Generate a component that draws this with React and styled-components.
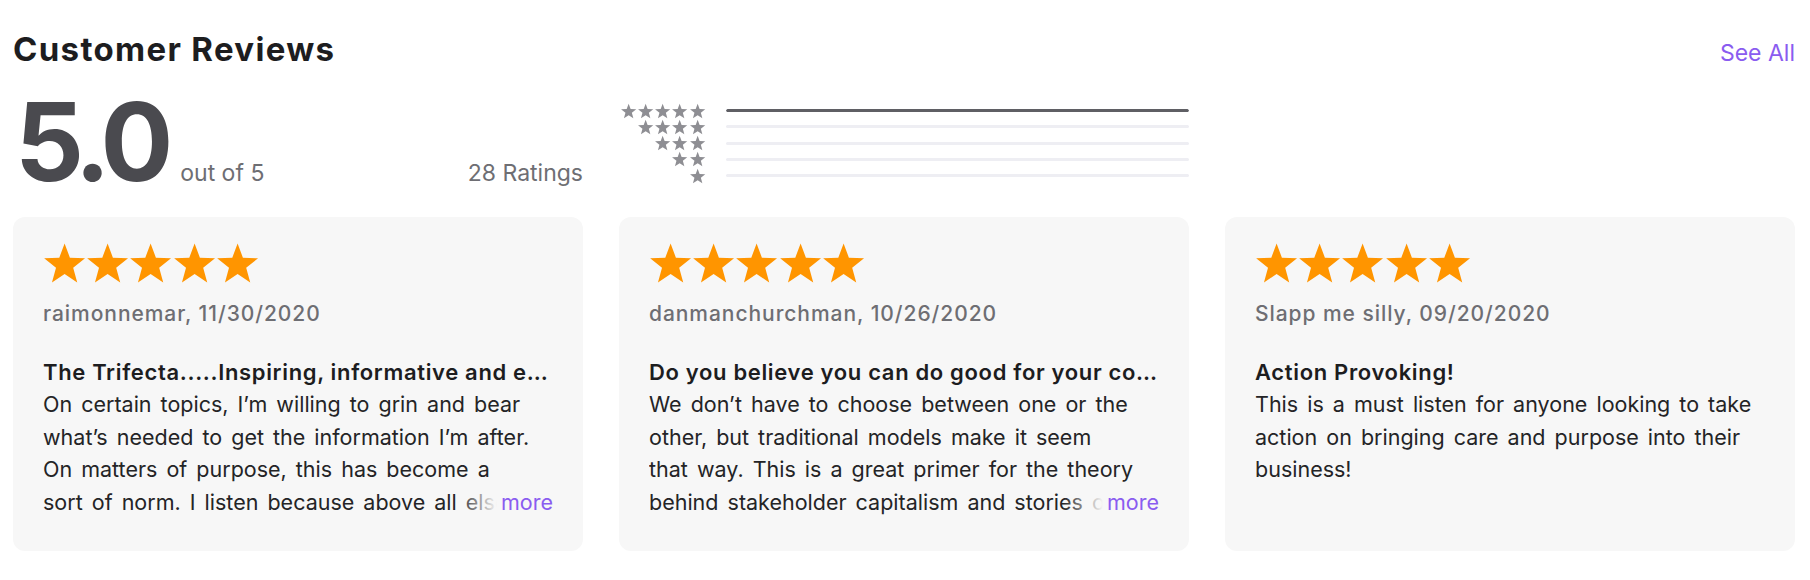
import React from "react";
import styled, { createGlobalStyle } from "styled-components";

const GlobalStyle = createGlobalStyle`
  html, body {
    margin: 0;
    padding: 0;
    background: #ffffff;
  }
  body {
    font-family: Inter, "Liberation Sans", "Noto Sans", sans-serif;
    -webkit-font-smoothing: antialiased;
  }
`;

const PURPLE = "#8a5cf0";
const CARD_BG = "#f7f7f7";

const starPoints = (cx, cy, R, r) =>
  Array.from({ length: 10 }, (_, i) => {
    const a = -Math.PI / 2 + (i * Math.PI) / 5;
    const rad = i % 2 === 0 ? R : r;
    return `${(cx + rad * Math.cos(a)).toFixed(2)},${(cy + rad * Math.sin(a)).toFixed(2)}`;
  }).join(" ");

const Star = ({ size, color }) => {
  const { w, h, R, cy } = size;
  return (
    <svg width={w} height={h} viewBox={`0 0 ${w} ${h}`} aria-hidden="true">
      <polygon points={starPoints(w / 2, cy, R, R * 0.42)} fill={color} />
    </svg>
  );
};

const BIG_STAR = { w: 43.2, h: 41, R: 21.5, cy: 22 };
const SMALL_STAR = { w: 17.3, h: 16, R: 8, cy: 8.8 };

const Page = styled.div`
  padding: 31px 15px 0 13px;
  width: 1782px;
`;

const Header = styled.header`
  display: flex;
  justify-content: space-between;
  align-items: baseline;
`;

const Title = styled.h2`
  margin: 0;
  font-size: 33px;
  line-height: 36px;
  font-weight: 700;
  color: #1d1d1f;
  letter-spacing: 0.04em;
`;

const SeeAll = styled.a`
  font-size: 23px;
  line-height: 36px;
  color: ${PURPLE};
  text-decoration: none;
  cursor: pointer;
`;

const Summary = styled.section`
  display: grid;
  grid-template-columns: repeat(3, 1fr);
  column-gap: 36px;
  margin-top: 18.5px;
  align-items: start;
`;

const ScoreBlock = styled.div`
  display: flex;
  align-items: baseline;
`;

const BigScore = styled.span`
  font-size: 108px;
  line-height: 103px;
  font-weight: 700;
  letter-spacing: -0.065em;
  color: #4a4a4f;
  margin-left: 2px;
`;

const MutedText = styled.span`
  font-size: 23px;
  line-height: 28px;
  color: #6e6e73;
  margin-left: ${(p) => (p.$push ? "auto" : "14px")};
`;

const Histogram = styled.div`
  display: flex;
  flex-direction: column;
  padding-top: 13px;
`;

const HistRow = styled.div`
  display: flex;
  align-items: center;
  height: 16.25px;
  gap: 20px;
`;

const StarCell = styled.div`
  width: 87px;
  display: flex;
  justify-content: flex-end;
`;

const Track = styled.div`
  flex: 1;
  height: 3px;
  border-radius: 2px;
  background: #eeeef3;
  overflow: hidden;
`;

const Fill = styled.div`
  height: 100%;
  background: #5f5f64;
  border-radius: 2px;
`;

const Cards = styled.section`
  display: grid;
  grid-template-columns: repeat(3, 1fr);
  column-gap: 36px;
  margin-top: 24px;
`;

const Card = styled.article`
  background: ${CARD_BG};
  border-radius: 12px;
  height: 334px;
  box-sizing: border-box;
  padding: 26px 30px 0 30px;
  min-width: 0;
`;

const StarsRow = styled.div`
  display: flex;
  height: 41px;
`;

const Author = styled.div`
  margin-top: 18.5px;
  font-size: 21px;
  line-height: 24px;
  font-weight: 500;
  letter-spacing: 0.045em;
  color: #6e6e73;
`;

const ReviewTitle = styled.h3`
  margin: 30px 0 0 0;
  font-size: 22px;
  line-height: 32px;
  font-weight: 600;
  letter-spacing: 0.03em;
  color: #1d1d1f;
  white-space: nowrap;
  overflow: hidden;
  text-overflow: ellipsis;
`;

const BodyWrap = styled.div`
  position: relative;
`;

const Body = styled.p`
  margin: 0;
  max-width: ${(p) => (p.$maxWidth ? `${p.$maxWidth}px` : "none")};
  font-size: 21.5px;
  line-height: 32.5px;
  letter-spacing: 0;
  word-spacing: 3px;
  color: #242426;
  max-height: 130px;
  overflow: hidden;
`;

const More = styled.a`
  position: absolute;
  right: 0;
  bottom: 0;
  font-size: 21.5px;
  line-height: 32.5px;
  color: ${PURPLE};
  padding-left: 44px;
  background: linear-gradient(to right, rgba(247, 247, 247, 0) 0, ${CARD_BG} 40px);
  cursor: pointer;
`;

const histogram = [100, 0, 0, 0, 0];

const reviews = [
  {
    author: "raimonnemar, 11/30/2020",
    title: "The Trifecta.....Inspiring, informative and entertaining",
    body:
      "On certain topics, I’m willing to grin and bear what’s needed to get the information I’m after. On matters of purpose, this has become a sort\u00a0of norm. I listen because above all else this show reminds me why the work matters.",
    more: true,
  },
  {
    author: "danmanchurchman, 10/26/2020",
    title: "Do you believe you can do good for your company and the world?",
    body:
      "We don’t have to choose between one or the other, but traditional models make it seem that way. This is a great primer for the theory behind stakeholder capitalism and stories of leaders who are putting it into practice.",
    more: true,
    width: 487,
  },
  {
    author: "Slapp me silly, 09/20/2020",
    title: "Action Provoking!",
    body:
      "This is a must listen for anyone looking to take action on bringing care and purpose into their business!",
    more: false,
  },
];

export default function App() {
  return (
    <>
      <GlobalStyle />
      <Page>
        <Header>
          <Title>Customer Reviews</Title>
          <SeeAll>See All</SeeAll>
        </Header>

        <Summary>
          <ScoreBlock>
            <BigScore>5.0</BigScore>
            <MutedText>out of 5</MutedText>
            <MutedText $push>28 Ratings</MutedText>
          </ScoreBlock>
          <Histogram>
            {histogram.map((pct, i) => (
              <HistRow key={i}>
                <StarCell>
                  {Array.from({ length: 5 - i }, (_, k) => (
                    <Star key={k} size={SMALL_STAR} color="#8e8e93" />
                  ))}
                </StarCell>
                <Track>
                  <Fill style={{ width: `${pct}%` }} />
                </Track>
              </HistRow>
            ))}
          </Histogram>
        </Summary>

        <Cards>
          {reviews.map((r) => (
            <Card key={r.author}>
              <StarsRow>
                {Array.from({ length: 5 }, (_, k) => (
                  <Star key={k} size={BIG_STAR} color="#ff9500" />
                ))}
              </StarsRow>
              <Author>{r.author}</Author>
              <ReviewTitle>{r.title}</ReviewTitle>
              <BodyWrap>
                <Body $maxWidth={r.width}>{r.body}</Body>
                {r.more && <More>more</More>}
              </BodyWrap>
            </Card>
          ))}
        </Cards>
      </Page>
    </>
  );
}
